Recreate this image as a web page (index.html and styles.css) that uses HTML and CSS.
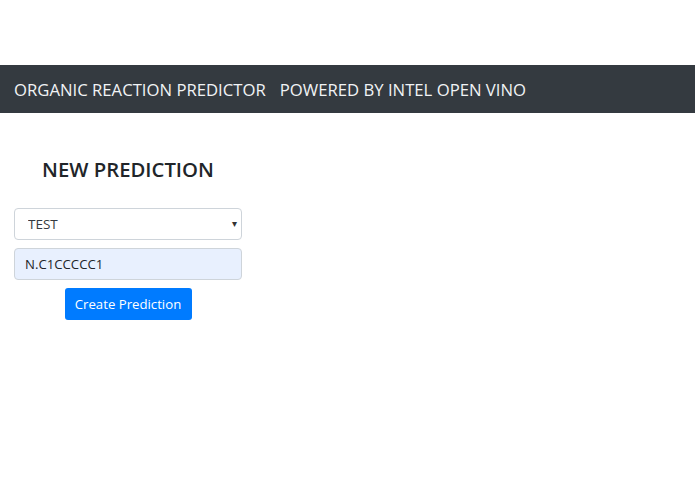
FILE: index.html
```html
<!DOCTYPE html>
<html>
<head>
<meta charset="utf-8">
<link rel="stylesheet" href="styles.css">
</head>
<body>
<nav class="navbar">
  <span class="brand">ORGANIC REACTION PREDICTOR</span>
  <span class="brand">POWERED BY INTEL OPEN VINO</span>
</nav>
<main class="panel">
  <h2 class="title">NEW PREDICTION</h2>
  <form class="form">
    <div class="select-wrap">
      <select class="control select">
        <option>TEST</option>
      </select>
      <span class="caret">&#9662;</span>
    </div>
    <input class="control input" type="text" value="N.C1CCCCC1">
    <button class="btn" type="button">Create Prediction</button>
  </form>
</main>
</body>
</html>
```
FILE: styles.css
```css
* { box-sizing: border-box; }
html, body { margin: 0; padding: 0; background: #fff; }
body {
  font-family: "Open Sans", "Noto Sans", "Liberation Sans", sans-serif;
  color: #212529;
  padding-top: 65px;
}
.navbar {
  background: #343a40;
  height: 48px;
  display: flex;
  align-items: center;
  gap: 14px;
  padding: 0 14px;
}
.brand {
  color: #f1f3f5;
  font-size: 16.7px;
  letter-spacing: 0;
}
.panel {
  width: 228px;
  margin-left: 14px;
  padding-top: 42px;
}
.title {
  margin: 0 0 25px;
  text-align: center;
  font-size: 20.3px;
  font-weight: 600;
  line-height: 28px;
  color: #212529;
}
.form {
  display: flex;
  flex-direction: column;
  align-items: center;
  gap: 8px;
}
.select-wrap {
  position: relative;
  width: 100%;
}
.control {
  display: block;
  width: 100%;
  height: 32px;
  border: 1px solid #ced4da;
  border-radius: 4px;
  font-family: inherit;
  font-size: 13.5px;
  color: #343a40;
  outline: none;
}
.select {
  appearance: none;
  -webkit-appearance: none;
  background: #fff;
  padding: 0 13px;
}
.caret {
  position: absolute;
  right: 5px;
  top: 8px;
  font-size: 10px;
  color: #333;
  pointer-events: none;
}
.input {
  background: #e8f0fe;
  padding: 0 10px;
  color: #212529;
  font-size: 13.2px;
}
.btn {
  width: 127px;
  height: 32px;
  background: #007bff;
  border: none;
  border-radius: 3px;
  color: #fff;
  font-family: inherit;
  font-size: 13.2px;
}
```
